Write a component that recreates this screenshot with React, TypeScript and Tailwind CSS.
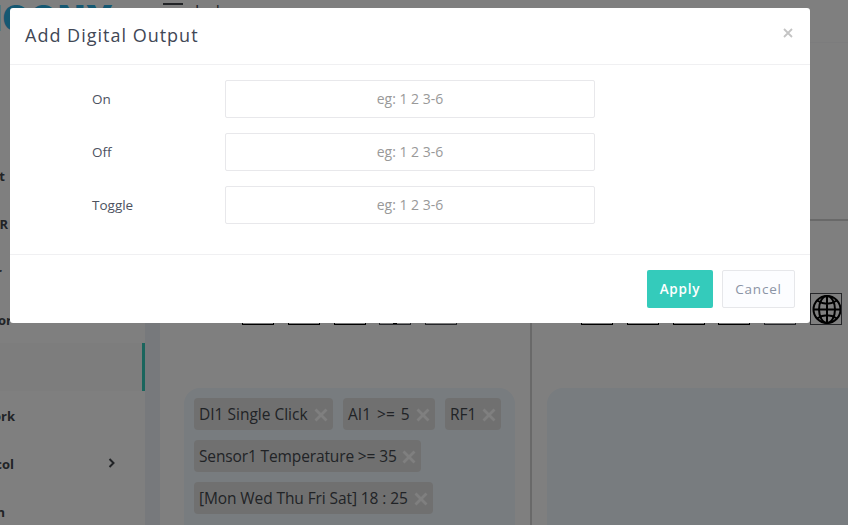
import React from "react";

const font = "font-['Open_Sans','Noto_Sans','Liberation_Sans',sans-serif]";

function IconBox({ dim, children }: { dim?: boolean; children?: React.ReactNode }) {
  return (
    <div className={"h-8 w-8 shrink-0 border " + (dim ? "border-[#4c4f55]" : "border-black")}>{children}</div>
  );
}

function Globe() {
  return (
    <svg viewBox="0 0 30 30" className="h-[30px] w-[30px]" fill="none" stroke="#000" strokeWidth="2">
      <circle cx="16" cy="15.5" r="13.5" />
      <ellipse cx="16" cy="15.5" rx="8" ry="13.5" />
      <path d="M16 2v27M2.500 15.500h27M6 6.500Q16 13 26 6.500M6 24.500Q16 18 26 24.500" />
    </svg>
  );
}

function Chip({ label, width }: { label: string; width: string }) {
  return (
    <div className={"flex h-8 items-center justify-between rounded bg-[#e0e0e0] pr-[5px] pl-[5px] text-[15.500px] whitespace-nowrap text-[#43474d] " + width}>
      <span className="mt-px">{label}</span>
      <svg viewBox="0 0 14 14" className="mt-0.5 h-3.5 w-3.5 shrink-0" stroke="#fff" strokeWidth="2.8">
        <path d="M1.500 1.500l11 11M12.500 1.500l-11 11" />
      </svg>
    </div>
  );
}

function NavItem({ label, width = "w-4", active, arrow }: { label: string; width?: string; active?: boolean; arrow?: boolean }) {
  return (
    <div className={"flex h-12 items-center justify-between " + (active ? "border-r-[3px] border-[#35cbba] bg-[#fbfbfb]" : "")}>
      <span className={"mt-[3px] flex justify-end whitespace-nowrap " + width}>{label}</span>
      {arrow && (
        <svg viewBox="0 0 8 12" className="mr-[29px] h-3 w-2" fill="none" stroke="#43474d" strokeWidth="2">
          <path d="M1.500 2l4 4-4 4" />
        </svg>
      )}
    </div>
  );
}

function Field({ label }: { label: string }) {
  return (
    <div className="flex h-[38px] items-center">
      <label className="w-[133px] text-[13.500px] text-[#4d525f]">{label}</label>
      <input
        placeholder="eg: 1 2 3-6"
        className="h-[38px] w-[370px] rounded-[2px] border border-[#e8e8eb] bg-white pb-0.5 text-center text-sm placeholder:text-[#999]"
      />
    </div>
  );
}

export default function App() {
  return (
    <div className={"relative flex h-[525px] w-[848px] overflow-hidden bg-white " + font}>
      <aside className="w-[145px] shrink-0 overflow-hidden bg-white text-[13px] font-bold text-[#43474d]">
        <div className="flex h-[55px] items-start justify-end overflow-hidden pr-[31px]">
          <span className="-mt-px shrink-0 font-['Inter',sans-serif] text-[35px] leading-[39px] font-black tracking-[1px] text-[#2ab0e4]">NCONY</span>
        </div>
        <nav className="pt-24">
          <NavItem label="t" width="w-[5px]" />
          <NavItem label="R" width="w-2" />
          <NavItem label="r" width="w-0.5" />
          <NavItem label="or" width="w-3" />
          <NavItem label="" active />
          <NavItem label="ork" width="w-[15px]" />
          <NavItem label="col" width="w-3.5" arrow />
          <NavItem label="n" width="w-[5px]" />
        </nav>
      </aside>
      <div className="flex min-w-0 flex-1 flex-col">
        <header className="flex h-[43px] shrink-0 items-start border-b border-[#f8f8fa] bg-white pl-[18px]">
          <div className="mt-[3px] h-0.5 w-5 bg-[#43474d]" />
          <span className="mt-px ml-3 text-base leading-5 text-[#43474d]">Jack</span>
        </header>
        <div className="flex flex-1 bg-[#eff2f8] pl-[15px]">
          <main className="flex flex-1 flex-col overflow-hidden bg-white">
            <div className="h-[178px] shrink-0 border-b-2 border-[#d3d3d3]" />
            <div className="flex flex-1">
              <section className="w-[372px] shrink-0 border-r-2 border-[#d3d3d3] pl-6">
                <div className="flex gap-[13.700px] pt-[72px] pl-[58.300px]">
                  <IconBox />
                  <IconBox />
                  <IconBox />
                  <IconBox dim>
                    <div className="mx-auto mt-[29px] h-px w-1 bg-black" />
                  </IconBox>
                  <IconBox dim />
                </div>
                <div className="mt-[63px] flex h-[180px] w-[331px] flex-wrap content-start gap-2.5 rounded-[16px] bg-[#f0f8ff] p-2.5">
                  <Chip label="DI1 Single Click" width="w-[139px]" />
                  <Chip label="AI1 >= 5" width="w-[92px] [word-spacing:2px]" />
                  <Chip label="RF1" width="w-[56px]" />
                  <Chip label="Sensor1 Temperature >= 35" width="w-[227px] tracking-[-0.130px]" />
                  <Chip label="[Mon Wed Thu Fri Sat] 18 : 25" width="w-[239px] tracking-[-0.100px]" />
                </div>
              </section>
              <section className="min-w-0 flex-1 pl-[15px]">
                <div className="flex gap-[13.700px] pt-[72px] pl-[34.300px]">
                  <IconBox />
                  <IconBox />
                  <IconBox />
                  <IconBox />
                  <IconBox dim />
                  <IconBox dim>
                    <Globe />
                  </IconBox>
                </div>
                <div className="mt-[63px] h-[180px] w-[331px] rounded-[16px] bg-[#f0f8ff]" />
              </section>
            </div>
          </main>
        </div>
      </div>

      <div className="absolute inset-0 bg-black/50 px-2.5 pt-2">
        <div className="flex h-[315px] w-[800px] flex-col rounded-[3px] bg-white">
          <div className="flex h-[57px] items-center justify-between border-b border-[#f0f0f2] pr-[17px] pl-[15px]">
            <h2 className="-mt-0.5 text-[18px] tracking-[1px] text-[#414755]">Add Digital Output</h2>
            <svg viewBox="0 0 10 10" className="-mt-1.5 h-2.5 w-2.5" stroke="#c4c4c4" strokeWidth="1.800">
              <path d="M1 1l8 8M9 1L1 9" />
            </svg>
          </div>
          <div className="flex flex-1 flex-col gap-[15px] pt-[15px] pl-[82px]">
            <Field label="On" />
            <Field label="Off" />
            <Field label="Toggle" />
          </div>
          <div className="flex h-[69px] items-start justify-end gap-[9px] border-t border-[#f0f0f2] pt-[15px] pr-[15px]">
            <button className="h-[38px] w-[66px] rounded-[2px] bg-[#34cbbb] pt-px text-[13.500px] font-semibold tracking-[0.800px] text-white">Apply</button>
            <button className="h-[38px] w-[73px] rounded-[2px] border border-[#e6e7ea] bg-[#fcfdff] pt-px text-[13.500px] tracking-[0.800px] text-[#8b94a5]">Cancel</button>
          </div>
        </div>
      </div>
    </div>
  );
}
